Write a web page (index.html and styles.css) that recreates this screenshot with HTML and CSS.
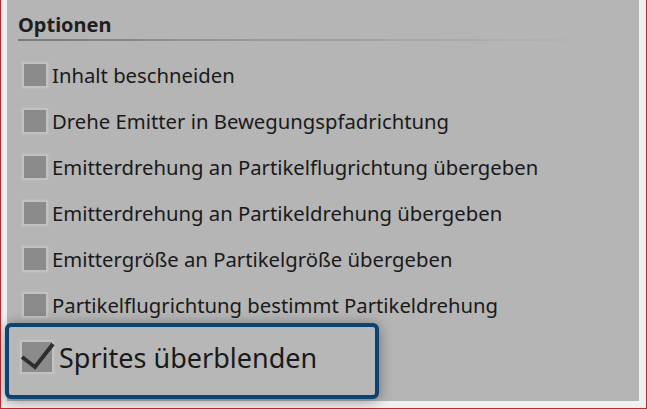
FILE: index.html
```html
<!DOCTYPE html>
<html lang="de">

<head>
    <meta charset="UTF-8">
    <meta name="viewport" content="width=device-width, initial-scale=1.0">
    <title>Optionen</title>
    <link rel="stylesheet" href="styles.css">
</head>

<body>
    <div class="frame">
        <div class="panel">
            <h2 class="title">Optionen</h2>
            <ul class="opts">
                <li><span class="box"></span>Inhalt beschneiden</li>
                <li><span class="box"></span>Drehe Emitter in Bewegungspfadrichtung</li>
                <li><span class="box"></span>Emitterdrehung an Partikelflugrichtung übergeben</li>
                <li><span class="box"></span>Emitterdrehung an Partikeldrehung übergeben</li>
                <li><span class="box"></span>Emittergröße an Partikelgröße übergeben</li>
                <li><span class="box"></span>Partikelflugrichtung bestimmt Partikeldrehung</li>
            </ul>
        </div>

        <!-- hervorgehobene Option -->
        <div class="callout">
            <span class="box big">
                <svg viewBox="0 0 36 34" width="36" height="34">
                    <path d="M2 17 L15 27 L33 4" fill="none" stroke="#2e2e2e" stroke-width="4" />
                </svg>
            </span>
            Sprites überblenden
        </div>
    </div>
</body>

</html>
```

FILE: styles.css
```css
/* reset */
* {
    margin: 0;
    box-sizing: border-box;
}

ul {
    padding: 0;
    list-style: none;
}

body {
    width: 647px;
    height: 409px;
    overflow: hidden;
    font-family: "Noto Sans", "Open Sans", sans-serif;
    color: #1a1a1a;
}

.frame {
    position: relative;
    height: 409px;
    padding: 0 7px 7px 6px;
    background: #f0f0f0;
    border: 1px solid #c4282c;
    border-top: 0;
}

.panel {
    height: 100%;
    padding: 13px 0 0 11px;
    background: #b5b5b5;
}

.title {
    width: 582px;
    padding-bottom: 4px;
    font-size: 20px;
    font-weight: bold;
    line-height: 24px;
    color: #1e1e1e;
    /* Linie läuft nach rechts aus */
    background: linear-gradient(to right, #7a7a7a, #999 40%, rgba(181, 181, 181, 0)) left bottom / 100% 2px no-repeat;
}

.opts {
    display: flex;
    flex-direction: column;
    gap: 21px;
    padding: 21px 0 0 4px;
}

.opts li {
    display: flex;
    align-items: center;
    height: 25px;
    font-size: 20.3px;
    white-space: nowrap;
}

.box {
    flex: none;
    width: 26px;
    height: 26px;
    margin-right: 4px;
    background: #8b8b8b;
    border: 2px solid #c2c2c2;
    box-shadow: 0 0 1px #cfcfcf;
}

.callout {
    position: absolute;
    left: 4px;
    top: 323px;
    width: 374px;
    height: 76px;
    display: flex;
    align-items: center;
    padding: 0 0 8px 11px;
    font-size: 27px;
    white-space: nowrap;
    background: #b7b7b7;
    border: 4px solid #0d4372;
    border-radius: 6px;
    box-shadow: 0 2px 14px rgba(0, 0, 0, 0.4);
}

.box.big {
    position: relative;
    width: 34px;
    height: 34px;
    margin-right: 5px;
}

.box.big svg {
    position: absolute;
    left: -2px;
    top: -2px;
}
```
